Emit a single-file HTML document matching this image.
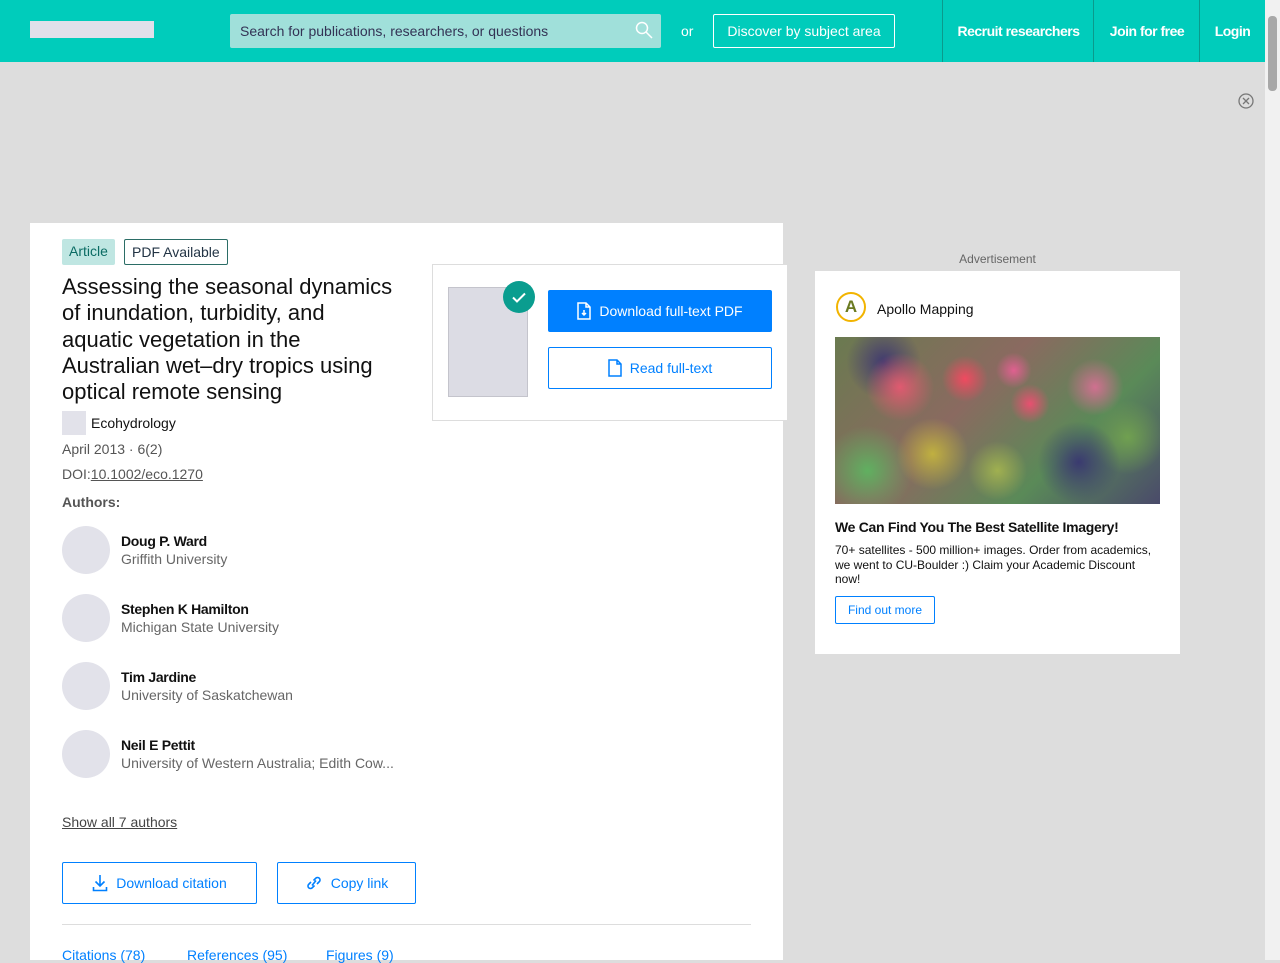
<!DOCTYPE html>
<html><head><meta charset="utf-8"><style>
*{box-sizing:border-box;margin:0;padding:0}
body{width:1280px;height:960px;overflow:hidden;background:#dddddd;font-family:"Liberation Sans",Arial,sans-serif;position:relative;color:#111}
.hdr{position:absolute;left:0;top:0;width:1265px;height:62px;background:#00ccbb}
.logo{position:absolute;left:30px;top:21px;width:124px;height:17px;background:#e0e0ea}
.search{position:absolute;left:230px;top:14px;width:431px;height:34px;background:#a0e0da;border-radius:2px;font-size:14px;color:#335;padding:9px 10px}
.or{position:absolute;left:681px;top:23px;color:#fff;font-size:14px}
.disc{position:absolute;left:713px;top:14px;width:182px;height:34px;border:1px solid #fff;border-radius:2px;color:#fff;font-size:14px;text-align:center;line-height:32px}
.nav{position:absolute;top:0;height:62px;border-left:1px solid #0a9a8c;color:#fff;font-weight:bold;font-size:14px;line-height:62px;text-align:center;letter-spacing:-0.5px}
.sb{position:absolute;right:0;top:0;width:15px;height:960px;background:#f1f1f1}
.sb i{position:absolute;left:3px;top:16px;width:9px;height:75px;background:#a8a8a8;border-radius:4px}
.card{position:absolute;left:30px;top:223px;width:753px;height:737px;background:#fff}
.tag{position:absolute;top:239px;height:26px;font-size:14px;line-height:24px;padding:0 7px;border-radius:2px}
h1{position:absolute;left:62px;top:274px;white-space:nowrap;font-size:22px;font-weight:normal;line-height:26.3px;color:#111}
.meta{position:absolute;left:62px;font-size:14px;color:#555}
.av{position:absolute;left:62px;width:48px;height:48px;border-radius:50%;background:#e2e2ea}
.an{position:absolute;left:121px;font-size:14px;font-weight:bold;color:#111;letter-spacing:-0.3px}
.af{position:absolute;left:121px;font-size:14px;color:#666}
.btn{position:absolute;border:1px solid #0080ff;border-radius:2px;color:#0080ff;font-size:14px;display:flex;align-items:center;justify-content:center;gap:8px;background:#fff}
.pdfbox{position:absolute;left:432px;top:264px;width:356px;height:157px;background:#fff;border:1px solid #ddd}
.ad{position:absolute;left:815px;top:271px;width:365px;height:383px;background:#fff}
.img{position:absolute;left:20px;top:66px;width:325px;height:167px;
background:
radial-gradient(circle at 20% 30%,#e05a70 0,transparent 12%),
radial-gradient(circle at 40% 25%,#f04a60 0,transparent 10%),
radial-gradient(circle at 60% 40%,#e85070 0,transparent 9%),
radial-gradient(circle at 55% 20%,#e06090 0,transparent 8%),
radial-gradient(circle at 80% 30%,#d07090 0,transparent 10%),
radial-gradient(circle at 30% 70%,#c0b040 0,transparent 14%),
radial-gradient(circle at 75% 75%,#3a3a70 0,transparent 15%),
radial-gradient(circle at 10% 80%,#60b060 0,transparent 14%),
radial-gradient(circle at 90% 60%,#70a050 0,transparent 12%),
radial-gradient(circle at 50% 80%,#a0b050 0,transparent 14%),
radial-gradient(circle at 15% 15%,#403a70 0,transparent 12%),
linear-gradient(135deg,#6a7a50,#8a6a60 40%,#5a8a58 70%,#4a4a6a);}
</style></head><body>
<div class="hdr">
<div class="logo"></div>
<div class="search">Search for publications, researchers, or questions
<svg style="position:absolute;right:8px;top:7px" width="18" height="18" viewBox="0 0 18 18" fill="none" stroke="#fff" stroke-width="1.5"><circle cx="7" cy="7" r="5.5"/><path d="M11 11l6 6"/></svg></div>
<div class="or">or</div>
<div class="disc">Discover by subject area</div>
<div class="nav" style="left:942px;width:152px">Recruit researchers</div>
<div class="nav" style="left:1093px;width:107px">Join for free</div>
<div class="nav" style="left:1199px;width:66px">Login</div>
</div>
<div class="sb"><i></i></div>
<svg style="position:absolute;left:1238px;top:93px" width="16" height="16" viewBox="0 0 16 16" fill="none" stroke="#777" stroke-width="1.3"><circle cx="8" cy="8" r="7"/><path d="M5 5l6 6M11 5l-6 6"/></svg>

<div class="card"></div>
<div class="tag" style="left:62px;background:#bfe6e2;color:#0a6c64">Article</div>
<div class="tag" style="left:124px;border:1px solid #2b6d66;color:#234">PDF Available</div>
<h1>Assessing the seasonal dynamics<br>of inundation, turbidity, and<br>aquatic vegetation in the<br>Australian wet–dry tropics using<br>optical remote sensing</h1>
<div style="position:absolute;left:62px;top:411px;width:24px;height:24px;background:#e2e2ea"></div>
<div class="meta" style="left:91px;top:415px;color:#111">Ecohydrology</div>
<div class="meta" style="top:441px">April 2013 · 6(2)</div>
<div class="meta" style="top:466px">DOI:<span style="text-decoration:underline">10.1002/eco.1270</span></div>
<div class="meta" style="top:494px;font-weight:bold">Authors:</div>

<div class="av" style="top:526px"></div><div class="an" style="top:533px">Doug P. Ward</div><div class="af" style="top:551px">Griffith University</div>
<div class="av" style="top:594px"></div><div class="an" style="top:601px">Stephen K Hamilton</div><div class="af" style="top:619px">Michigan State University</div>
<div class="av" style="top:662px"></div><div class="an" style="top:669px">Tim Jardine</div><div class="af" style="top:687px">University of Saskatchewan</div>
<div class="av" style="top:730px"></div><div class="an" style="top:737px">Neil E Pettit</div><div class="af" style="top:755px">University of Western Australia; Edith Cow...</div>

<div class="meta" style="top:814px;color:#444;text-decoration:underline">Show all 7 authors</div>
<div class="btn" style="left:62px;top:862px;width:195px;height:42px"><svg width="16" height="18" viewBox="0 0 16 18" fill="none" stroke="#0080ff" stroke-width="1.6"><path d="M8 1v11M3.5 7.5L8 12l4.5-4.5M1.5 13v3.5h13V13"/></svg>Download citation</div>
<div class="btn" style="left:277px;top:862px;width:139px;height:42px"><svg width="18" height="14" viewBox="0 0 18 14" fill="none" stroke="#0080ff" stroke-width="1.6"><path d="M7 9.5l4-5M6 6L3.5 8.5a2.5 2.5 0 003.5 3.5L9.5 9.5M12 8l2.5-2.5A2.5 2.5 0 0011 2L8.5 4.5"/></svg>Copy link</div>
<div style="position:absolute;left:62px;top:924px;width:689px;height:1px;background:#ddd"></div>
<div class="meta" style="top:947px;color:#0080ff">Citations (78)</div>
<div class="meta" style="left:187px;top:947px;color:#0080ff">References (95)</div>
<div class="meta" style="left:326px;top:947px;color:#0080ff">Figures (9)</div>

<div class="pdfbox">
<div style="position:absolute;left:15px;top:22px;width:80px;height:110px;background:#dcdce4;border:1px solid #c4c4cc"></div>
<div style="position:absolute;left:70px;top:16px;width:32px;height:32px;border-radius:50%;background:#0a9d8f"><svg width="32" height="32" viewBox="0 0 32 32" fill="none" stroke="#fff" stroke-width="2"><path d="M10 16.5l4 4 8-8"/></svg></div>
<div class="btn" style="left:115px;top:25px;width:224px;height:42px;background:#0080ff;color:#fff"><svg width="14" height="18" viewBox="0 0 14 18" fill="none" stroke="#fff" stroke-width="1.5"><path d="M1 1h8l4 4v12H1zM9 1v4h4M7 8v5M5 11l2 2 2-2"/></svg>Download full-text PDF</div>
<div class="btn" style="left:115px;top:82px;width:224px;height:42px"><svg width="14" height="18" viewBox="0 0 14 18" fill="none" stroke="#0080ff" stroke-width="1.5"><path d="M1 1h8l4 4v12H1zM9 1v4h4"/></svg>Read full-text</div>
</div>

<div style="position:absolute;left:815px;top:252px;width:365px;text-align:center;font-size:12px;color:#666">Advertisement</div>
<div class="ad">
<div style="position:absolute;left:21px;top:21px;width:30px;height:30px;border-radius:50%;border:2px solid #f2b400;color:#6a7a20;font-weight:bold;font-size:17px;text-align:center;line-height:26px">A</div>
<div style="position:absolute;left:62px;top:30px;font-size:14px">Apollo Mapping</div>
<div class="img"></div>
<div style="position:absolute;left:20px;top:248px;font-size:14px;font-weight:bold;letter-spacing:-0.3px">We Can Find You The Best Satellite Imagery!</div>
<div style="position:absolute;left:20px;top:272px;width:318px;font-size:12px;line-height:14.5px">70+ satellites - 500 million+ images. Order from academics, we went to CU-Boulder :) Claim your Academic Discount now!</div>
<div class="btn" style="left:20px;top:325px;width:100px;height:28px;font-size:12px">Find out more</div>
</div>
</body></html>
